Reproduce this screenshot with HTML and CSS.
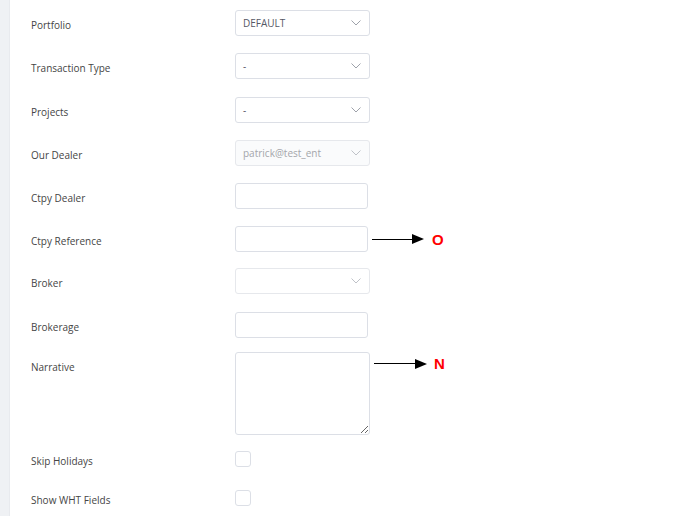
FILE: index.html
```html
<!DOCTYPE html>
<html lang="en">
<head>
<meta charset="utf-8">
<title>Trade form</title>
<link rel="stylesheet" href="styles.css">
</head>
<body>
<div class="page">
  <div class="strip"></div>
  <div class="main">
    <div class="form">
      <div class="row">
        <div class="label">Portfolio</div>
        <div class="select"><span class="value">DEFAULT</span><svg class="chev" viewBox="0 0 10 6" width="10" height="6"><polyline points="0.5,0.5 5,5 9.5,0.5"/></svg></div>
      </div>
      <div class="row">
        <div class="label">Transaction Type</div>
        <div class="select"><span class="value">-</span><svg class="chev" viewBox="0 0 10 6" width="10" height="6"><polyline points="0.5,0.5 5,5 9.5,0.5"/></svg></div>
      </div>
      <div class="row">
        <div class="label">Projects</div>
        <div class="select"><span class="value">-</span><svg class="chev" viewBox="0 0 10 6" width="10" height="6"><polyline points="0.5,0.5 5,5 9.5,0.5"/></svg></div>
      </div>
      <div class="row">
        <div class="label">Our Dealer</div>
        <div class="select disabled"><span class="value">patrick@test_ent</span><svg class="chev" viewBox="0 0 10 6" width="10" height="6"><polyline points="0.5,0.5 5,5 9.5,0.5"/></svg></div>
      </div>
      <div class="row">
        <div class="label">Ctpy Dealer</div>
        <input class="text" type="text">
      </div>
      <div class="row">
        <div class="label">Ctpy Reference</div>
        <input class="text" type="text">
        <div class="note"><span class="line"></span><span class="head"></span><span class="mark">O</span></div>
      </div>
      <div class="row row-tight">
        <div class="label">Broker</div>
        <div class="select light"><span class="value"></span><svg class="chev" viewBox="0 0 10 6" width="10" height="6"><polyline points="0.5,0.5 5,5 9.5,0.5"/></svg></div>
      </div>
      <div class="row">
        <div class="label">Brokerage</div>
        <input class="text" type="text">
      </div>
      <div class="row row-area">
        <div class="label">Narrative</div>
        <textarea class="area"></textarea>
        <div class="note note-top"><span class="line"></span><span class="head"></span><span class="mark">N</span></div>
      </div>
      <div class="checks">
        <div class="row row-check">
          <div class="label">Skip Holidays</div>
          <span class="box"></span>
        </div>
        <div class="row row-check">
          <div class="label">Show WHT Fields</div>
          <span class="box"></span>
        </div>
      </div>
    </div>
  </div>
</div>
</body>
</html>
```

FILE: styles.css
```css
html, body {
  margin: 0;
  padding: 0;
  background: #ffffff;
}

.page {
  display: flex;
  min-height: 516px;
  font-family: "Open Sans", "Noto Sans", sans-serif;
}

.strip {
  width: 9px;
  flex: none;
  background: #eff1f4;
  border-right: 1px solid #e8eaee;
}

.main {
  flex: 1;
  padding: 10px 0 0 21px;
}

.form {
  display: flex;
  flex-direction: column;
  gap: 17.3px;
}

.row {
  display: flex;
  align-items: flex-start;
}

.row-tight {
  margin-top: -1.5px;
}

.row-area {
  margin-top: -2.5px;
}

.label {
  box-sizing: border-box;
  width: 204px;
  flex: none;
  font-size: 10px;
  line-height: 26px;
  padding-top: 2px;
  color: #454545;
  height: 26px;
}

.select {
  box-sizing: border-box;
  width: 135px;
  height: 26px;
  border: 1px solid #dcdfe6;
  border-radius: 3px;
  background: #ffffff;
  display: flex;
  align-items: center;
  justify-content: space-between;
  padding: 0 8px 0 7px;
}

.select .value {
  font-size: 10px;
  color: #555866;
}

.select.disabled {
  background: #fafbfc;
  border-color: #e6e8ec;
}

.select.disabled .value {
  color: #a4a6ab;
}

.select.light {
  border-color: #e6e8ec;
}

.chev {
  display: block;
  fill: none;
  stroke: #9ea2aa;
  stroke-width: 1;
}

.select.disabled .chev,
.select.light .chev {
  stroke: #bfc2c8;
}

.text {
  box-sizing: border-box;
  width: 133px;
  height: 26px;
  margin: 0;
  border: 1px solid #dcdfe6;
  border-radius: 3px;
  background: #ffffff;
  outline: none;
  padding: 0 7px;
  font-family: inherit;
  font-size: 10px;
}

.area {
  box-sizing: border-box;
  width: 135px;
  height: 83px;
  margin: 0;
  border: 1px solid #dcdfe6;
  border-radius: 3px;
  background: #ffffff;
  outline: none;
  resize: vertical;
  padding: 4px 7px;
  font-family: inherit;
  font-size: 10px;
  display: block;
}

.note {
  display: flex;
  align-items: center;
  height: 26px;
  margin-left: 4px;
}

.note-top {
  height: 23px;
  margin-left: 4px;
}

.line {
  display: block;
  width: 40px;
  height: 1px;
  background: #000000;
}

.note-top .line {
  width: 41px;
}

.head {
  display: block;
  width: 0;
  height: 0;
  border-top: 5px solid transparent;
  border-bottom: 5px solid transparent;
  border-left: 12px solid #000000;
}

.mark {
  margin-left: 8px;
  font-family: "Liberation Sans", Arial, sans-serif;
  font-weight: bold;
  font-size: 15px;
  color: #ff0000;
}

.note-top .mark {
  margin-left: 7px;
}

.checks {
  display: flex;
  flex-direction: column;
  gap: 17px;
  margin-top: -5px;
}

.row-check {
  align-items: center;
  height: 22px;
}

.row-check .label {
  height: 22px;
  line-height: 22px;
  padding-top: 2px;
}

.box {
  box-sizing: border-box;
  width: 16px;
  height: 16px;
  border: 1px solid #dcdfe6;
  border-radius: 3px;
  background: #ffffff;
  display: block;
}
```
